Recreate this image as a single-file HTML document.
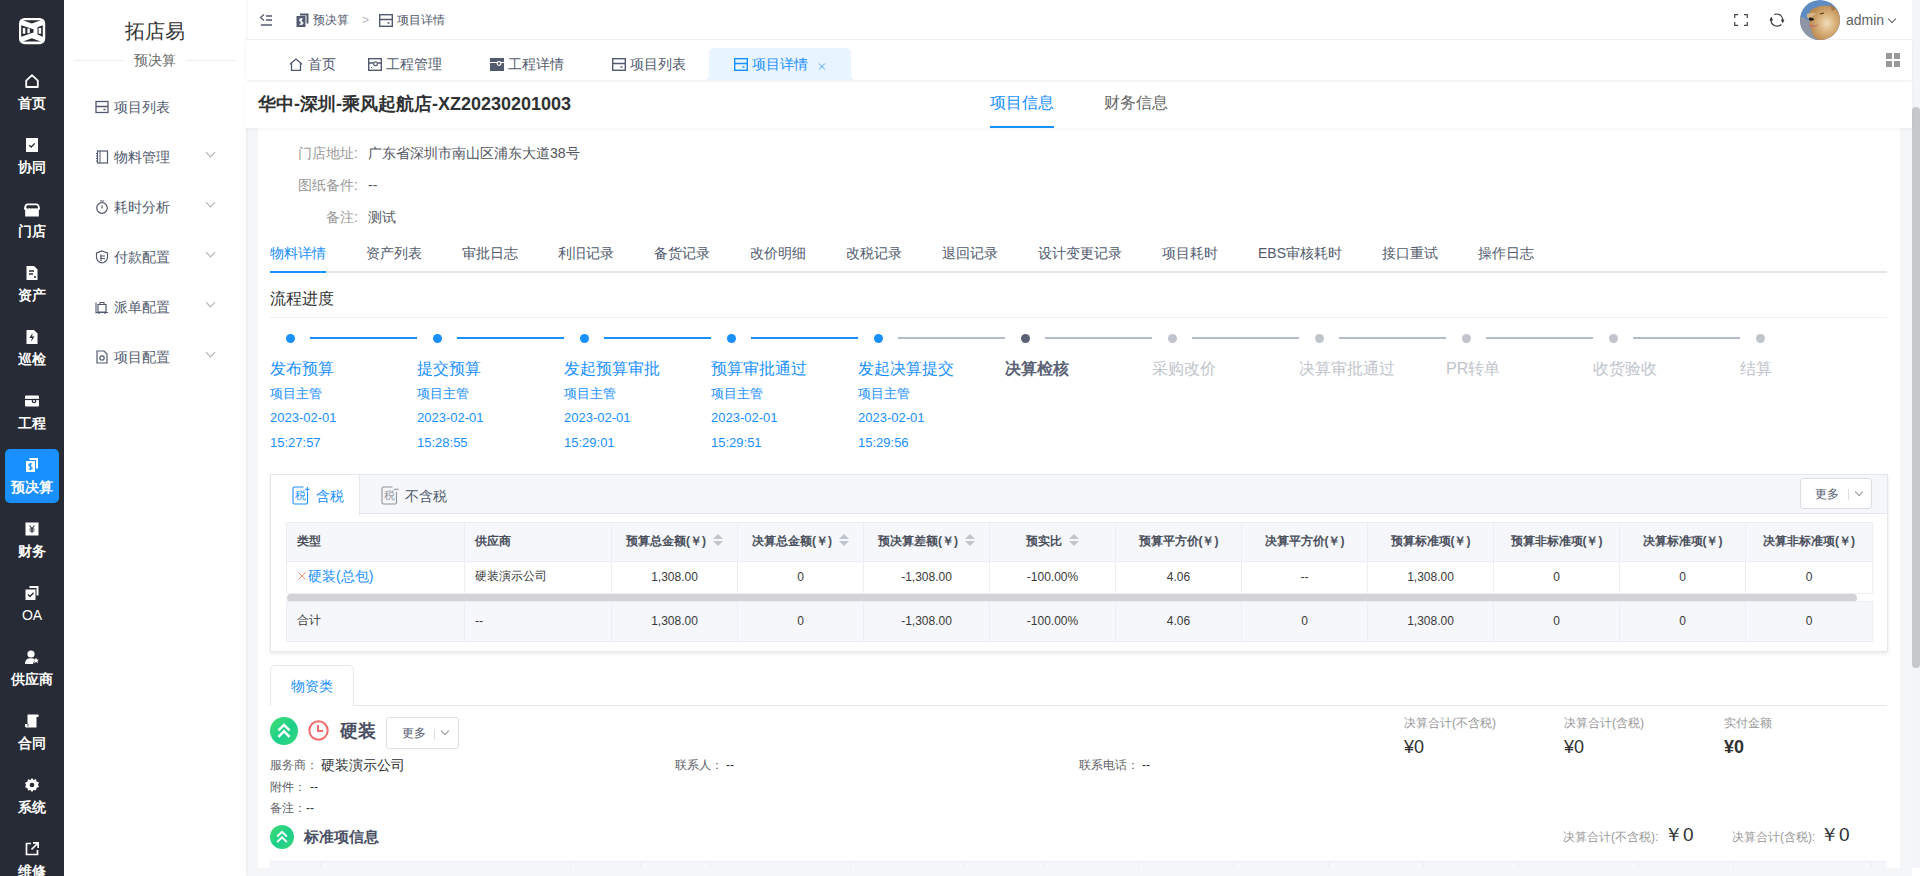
<!DOCTYPE html>
<html><head><meta charset="utf-8">
<style>
*{box-sizing:border-box;margin:0;padding:0}
html,body{width:1920px;height:876px;overflow:hidden;background:#fff;font-family:"Liberation Sans",sans-serif;color:#606266}
.a{position:absolute}
.t{position:absolute;white-space:nowrap;line-height:1}
#nav1{left:0;top:0;width:64px;height:876px;background:#272b35}
.n1{position:absolute;left:5px;width:54px;height:54px;border-radius:5px;color:#fff;font-size:14px}
.n1.on{background:#1890ff}
.n1 svg{position:absolute;left:20px;top:9px;width:14px;height:14px}
.n1 span{position:absolute;left:0;width:54px;top:31px;text-align:center;line-height:14px;font-weight:bold}
#nav2{left:64px;top:0;width:182px;height:876px;background:#fff;box-shadow:1px 0 3px rgba(0,0,0,.06)}
.n2{position:absolute;left:31px;width:140px;height:20px;font-size:14px;color:#515a6e;line-height:20px}
.n2 svg{position:absolute;left:0;top:3px;width:14px;height:14px}
.n2 span{position:absolute;left:19px;top:0}
.n2 i{position:absolute;left:112px;top:2px;width:7px;height:7px;border-right:1px solid #a8abb2;border-bottom:1px solid #a8abb2;transform:rotate(45deg)}

#hdr{left:246px;top:0;width:1666px;height:40px;background:#fff;border-bottom:1px solid #f2f3f5}
#tabs{z-index:2;left:246px;top:40px;width:1666px;height:40px;background:#fff;box-shadow:0 1px 3px rgba(0,0,0,.07)}
.tb{position:absolute;top:4px;height:40px;font-size:14px;color:#515a6e;line-height:40px;white-space:nowrap}
.tb svg{position:absolute;top:18px;width:14px;height:13px}
#ttl{z-index:1;left:246px;top:80px;width:1666px;height:48px;background:#fff;box-shadow:0 2px 4px rgba(0,0,0,.035)}
#bg{left:246px;top:128px;width:1666px;height:748px;background:#f5f6f8}
#card{left:258px;top:128px;width:1642px;height:740px;background:#fff}
#sb{left:1912px;top:0;width:8px;height:868px;background:#f4f5f8}
#thumb{left:1912px;top:107px;width:8px;height:561px;background:#c6c7ca;border-radius:4px}

.lb{position:absolute;font-size:14px;color:#999;line-height:20px;white-space:nowrap;text-align:right;width:100px}
.vl{position:absolute;font-size:14px;color:#505560;line-height:20px;white-space:nowrap}
.st{position:absolute;font-size:14px;color:#515a6e;line-height:20px;white-space:nowrap}
.stp{position:absolute;white-space:nowrap;color:#1890ff}
.stp .h{position:absolute;left:0;top:0;font-size:16px;line-height:20px}
.stp .s{position:absolute;left:0;font-size:13px;line-height:16px}
.dot{position:absolute;width:9px;height:9px;border-radius:50%;top:334px}
.ln{position:absolute;height:2px;top:337px;width:107px}

#tax{left:270px;top:474px;width:1618px;height:178px;border:1px solid #e4e7ed;background:#fff;box-shadow:0 2px 4px rgba(0,0,0,.08)}
#taxh{left:0;top:0;width:1616px;height:39px;background:#f5f7fa;border-bottom:1px solid #e4e7ed}
table.g{position:absolute;border-collapse:collapse;table-layout:fixed;font-size:12px}
table.g td{border:1px solid #ebeef5;padding:0 10px;white-space:nowrap;color:#606266;overflow:hidden}
table.g tr.hd td{background:#f5f7fa;color:#4a4f5c;font-weight:bold;height:39px;padding-bottom:2px}
table.g tr.bd td{height:32px;background:#fff;color:#3a3a3a;padding-bottom:2px}
table.g tr.ft td{height:40px;background:#f5f7fa;color:#3a3a3a;padding-bottom:2px}
.c{text-align:center}
.srt{display:inline-block;vertical-align:middle;margin-left:7px;width:10px;height:14px;position:relative;top:-1px}
.srt:before{content:"";position:absolute;left:0;top:1px;border-left:5px solid transparent;border-right:5px solid transparent;border-bottom:5px solid #c0c4cc}
.srt:after{content:"";position:absolute;left:0;top:8px;border-left:5px solid transparent;border-right:5px solid transparent;border-top:5px solid #c0c4cc}
.btn{position:absolute;width:72px;height:31px;border:1px solid #dcdfe6;border-radius:3px;background:#fff;font-size:12px;color:#515a6e}
.btn span{position:absolute;left:14px;top:8px;line-height:14px}
.btn b{position:absolute;left:47px;top:10px;width:1px;height:11px;background:#dcdfe6}
.btn i{position:absolute;left:55px;top:10px;width:6px;height:6px;border-right:1px solid #909399;border-bottom:1px solid #909399;transform:rotate(45deg)}

.chev2{position:absolute;width:24px;height:24px;border-radius:50%;background:linear-gradient(135deg,#41de6f 0,#1dcf8b 55%,#38d97a 100%)}
.sm{position:absolute;font-size:12px;color:#606266;line-height:16px;white-space:nowrap}
</style></head><body>

<div id="bg" class="a"></div>
<div id="card" class="a"></div>
<div class="lb" style="left:258px;top:143px">门店地址:</div><div class="vl" style="left:368px;top:143px">广东省深圳市南山区浦东大道38号</div>
<div class="lb" style="left:258px;top:175px">图纸备件:</div><div class="vl" style="left:368px;top:175px">--</div>
<div class="lb" style="left:258px;top:207px">备注:</div><div class="vl" style="left:368px;top:207px">测试</div>
<div class="a" style="left:270px;top:271px;width:1617px;height:2px;background:#e4e7ed"></div>
<div class="st" style="left:270px;top:243px;color:#1890ff">物料详情</div>
<div class="st" style="left:366px;top:243px">资产列表</div>
<div class="st" style="left:462px;top:243px">审批日志</div>
<div class="st" style="left:558px;top:243px">利旧记录</div>
<div class="st" style="left:654px;top:243px">备货记录</div>
<div class="st" style="left:750px;top:243px">改价明细</div>
<div class="st" style="left:846px;top:243px">改税记录</div>
<div class="st" style="left:942px;top:243px">退回记录</div>
<div class="st" style="left:1038px;top:243px">设计变更记录</div>
<div class="st" style="left:1162px;top:243px">项目耗时</div>
<div class="st" style="left:1258px;top:243px">EBS审核耗时</div>
<div class="st" style="left:1382px;top:243px">接口重试</div>
<div class="st" style="left:1478px;top:243px">操作日志</div>
<div class="a" style="left:270px;top:271px;width:56px;height:2px;background:#1890ff"></div>
<div class="t" style="left:270px;top:291px;font-size:16px;color:#303133">流程进度</div>
<div class="a" style="left:270px;top:317px;width:1617px;height:1px;background:#ebeef5"></div>
<div class="dot" style="left:285.5px;background:#1890ff"></div>
<div class="ln" style="left:310px;background:#1890ff"></div>
<div class="stp" style="left:270px;top:359px"><div class="h">发布预算</div><div class="s" style="top:27px">项目主管</div><div class="s" style="top:51px">2023-02-01</div><div class="s" style="top:76px">15:27:57</div></div>
<div class="dot" style="left:432.5px;background:#1890ff"></div>
<div class="ln" style="left:457px;background:#1890ff"></div>
<div class="stp" style="left:417px;top:359px"><div class="h">提交预算</div><div class="s" style="top:27px">项目主管</div><div class="s" style="top:51px">2023-02-01</div><div class="s" style="top:76px">15:28:55</div></div>
<div class="dot" style="left:579.5px;background:#1890ff"></div>
<div class="ln" style="left:604px;background:#1890ff"></div>
<div class="stp" style="left:564px;top:359px"><div class="h">发起预算审批</div><div class="s" style="top:27px">项目主管</div><div class="s" style="top:51px">2023-02-01</div><div class="s" style="top:76px">15:29:01</div></div>
<div class="dot" style="left:726.5px;background:#1890ff"></div>
<div class="ln" style="left:751px;background:#1890ff"></div>
<div class="stp" style="left:711px;top:359px"><div class="h">预算审批通过</div><div class="s" style="top:27px">项目主管</div><div class="s" style="top:51px">2023-02-01</div><div class="s" style="top:76px">15:29:51</div></div>
<div class="dot" style="left:873.5px;background:#1890ff"></div>
<div class="ln" style="left:898px;background:#b4bccc"></div>
<div class="stp" style="left:858px;top:359px"><div class="h">发起决算提交</div><div class="s" style="top:27px">项目主管</div><div class="s" style="top:51px">2023-02-01</div><div class="s" style="top:76px">15:29:56</div></div>
<div class="dot" style="left:1020.5px;background:#5b6175"></div>
<div class="ln" style="left:1045px;background:#b4bccc"></div>
<div class="stp" style="left:1005px;top:359px;color:#5b6175"><div class="h" style=";font-weight:bold">决算检核</div></div>
<div class="dot" style="left:1167.5px;background:#c0c4cc"></div>
<div class="ln" style="left:1192px;background:#b4bccc"></div>
<div class="stp" style="left:1152px;top:359px;color:#c0c4cc"><div class="h" style="">采购改价</div></div>
<div class="dot" style="left:1314.5px;background:#c0c4cc"></div>
<div class="ln" style="left:1339px;background:#b4bccc"></div>
<div class="stp" style="left:1299px;top:359px;color:#c0c4cc"><div class="h" style="">决算审批通过</div></div>
<div class="dot" style="left:1461.5px;background:#c0c4cc"></div>
<div class="ln" style="left:1486px;background:#b4bccc"></div>
<div class="stp" style="left:1446px;top:359px;color:#c0c4cc"><div class="h" style="">PR转单</div></div>
<div class="dot" style="left:1608.5px;background:#c0c4cc"></div>
<div class="ln" style="left:1633px;background:#b4bccc"></div>
<div class="stp" style="left:1593px;top:359px;color:#c0c4cc"><div class="h" style="">收货验收</div></div>
<div class="dot" style="left:1755.5px;background:#c0c4cc"></div>
<div class="stp" style="left:1740px;top:359px;color:#c0c4cc"><div class="h" style="">结算</div></div>
<div id="tax" class="a">
<div id="taxh" class="a"></div>
<div class="a" style="left:0;top:0;width:89px;height:40px;background:#fff;border-right:1px solid #e4e7ed"></div>
<svg class="a" style="left:21px;top:11px" width="19" height="19" viewBox="0 0 19 19"><path d="M11.5 1H2.5A1.5 1.5 0 0 0 1 2.5V16.5A1.5 1.5 0 0 0 2.5 18H14A1.5 1.5 0 0 0 15.5 16.5V6" fill="none" stroke="#1890ff" stroke-width="1.1"/><text x="2.6" y="13.3" font-size="10.5" fill="#1890ff" font-family="Liberation Sans,sans-serif">税</text><path d="M15.3 1V5.6M13 3.3H17.6" stroke="#1890ff" stroke-width="1.1"/></svg>
<div class="t" style="left:45px;top:14px;font-size:14px;color:#1890ff">含税</div>
<svg class="a" style="left:110px;top:11px" width="19" height="19" viewBox="0 0 19 19"><path d="M11.5 1H2.5A1.5 1.5 0 0 0 1 2.5V16.5A1.5 1.5 0 0 0 2.5 18H14A1.5 1.5 0 0 0 15.5 16.5V6" fill="none" stroke="#909399" stroke-width="1.1"/><text x="2.6" y="13.3" font-size="10.5" fill="#909399" font-family="Liberation Sans,sans-serif">税</text><path d="M13 3.3H17.6" stroke="#909399" stroke-width="1.1"/></svg>
<div class="t" style="left:134px;top:14px;font-size:14px;color:#515a6e">不含税</div>
<div class="btn" style="left:1529px;top:3px"><span>更多</span><b></b><i></i></div>
<table class="g" style="left:15px;top:47px;width:1586px"><colgroup><col style="width:178px"><col style="width:147px"><col style="width:126px"><col style="width:126px"><col style="width:126px"><col style="width:126px"><col style="width:126px"><col style="width:126px"><col style="width:126px"><col style="width:126px"><col style="width:126px"><col style="width:127px"></colgroup><tr class="hd"><td>类型</td><td>供应商</td><td class="c">预算总金额(￥)<i class="srt"></i></td><td class="c">决算总金额(￥)<i class="srt"></i></td><td class="c">预决算差额(￥)<i class="srt"></i></td><td class="c">预实比<i class="srt"></i></td><td class="c">预算平方价(￥)</td><td class="c">决算平方价(￥)</td><td class="c">预算标准项(￥)</td><td class="c">预算非标准项(￥)</td><td class="c">决算标准项(￥)</td><td class="c">决算非标准项(￥)</td></tr><tr class="bd"><td><svg width="8" height="8" viewBox="0 0 8 8" style="margin:0 2px 0 1px;vertical-align:1px"><path d="M.5 .5L7.5 7.5M7.5 .5L.5 7.5" stroke="#f78a6a" stroke-width="1"/></svg><span style="color:#1890ff;font-size:14px">硬装(总包)</span></td><td>硬装演示公司</td><td class="c">1,308.00</td><td class="c">0</td><td class="c">-1,308.00</td><td class="c">-100.00%</td><td class="c">4.06</td><td class="c">--</td><td class="c">1,308.00</td><td class="c">0</td><td class="c">0</td><td class="c">0</td></tr><tr><td colspan="12" style="height:8px;padding:0;border:none;background:#fff;position:relative"><div style="position:absolute;left:0;top:0;width:1570px;height:8px;border-radius:4px;background:#d3d3d5"></div></td></tr><tr class="ft"><td>合计</td><td>--</td><td class="c">1,308.00</td><td class="c">0</td><td class="c">-1,308.00</td><td class="c">-100.00%</td><td class="c">4.06</td><td class="c">0</td><td class="c">1,308.00</td><td class="c">0</td><td class="c">0</td><td class="c">0</td></tr></table>
</div>

<svg class="a" style="left:270px;top:665px" width="84" height="41" viewBox="0 0 84 41"><path d="M0.5 41V5A4.5 4.5 0 0 1 5 0.5H79A4.5 4.5 0 0 1 83.5 5V41" fill="#fff" stroke="#e4e7ed" stroke-width="1"/></svg>
<div class="a" style="left:353px;top:705px;width:1534px;height:1px;background:#e4e7ed"></div>
<div class="t" style="left:291px;top:679px;font-size:14px;color:#1890ff">物资类</div>
<div class="chev2" style="left:270px;top:717px;width:28px;height:28px"><svg style="position:absolute;left:0;top:0" width="28" height="28" viewBox="0 0 24 24"><path d="M7.2 11.5L12 6.8L16.8 11.5M7.2 17L12 12.3L16.8 17" fill="none" stroke="#fff" stroke-width="2.2"/></svg></div>
<svg class="a" style="left:308px;top:720px" width="21" height="21" viewBox="0 0 21 21"><circle cx="10.5" cy="10.5" r="9.2" fill="none" stroke="#f56c6c" stroke-width="2"/><path d="M10 5V11H15" fill="none" stroke="#f56c6c" stroke-width="2"/></svg>
<div class="t" style="left:340px;top:722px;font-size:18px;font-weight:bold;color:#4a5064">硬装</div>
<div class="btn" style="left:386px;top:717px;width:73px;height:32px"><span style="left:15px;top:8px">更多</span><b style="left:47px;top:11px"></b><i style="left:55px;top:10px"></i></div>
<div class="sm" style="left:270px;top:757px">服务商：</div><div class="t" style="left:321px;top:758px;font-size:14px;color:#303133">硬装演示公司</div>
<div class="sm" style="left:675px;top:757px">联系人：</div><div class="sm" style="left:726px;top:757px;color:#303133">--</div>
<div class="sm" style="left:1079px;top:757px">联系电话：</div><div class="sm" style="left:1142px;top:757px;color:#303133">--</div>
<div class="sm" style="left:270px;top:779px">附件：</div><div class="sm" style="left:310px;top:779px;color:#303133">--</div>
<div class="sm" style="left:270px;top:800px">备注：</div><div class="sm" style="left:306px;top:800px;color:#303133">--</div>
<div class="sm" style="left:1404px;top:715px;color:#999">决算合计(不含税)</div><div class="t" style="left:1404px;top:738px;font-size:18px;color:#303133">¥0</div>
<div class="sm" style="left:1564px;top:715px;color:#999">决算合计(含税)</div><div class="t" style="left:1564px;top:738px;font-size:18px;color:#303133">¥0</div>
<div class="sm" style="left:1724px;top:715px;color:#999">实付金额</div><div class="t" style="left:1724px;top:738px;font-size:18px;font-weight:bold;color:#303133">¥0</div>
<div class="chev2" style="left:270px;top:825px;width:24px;height:24px"><svg style="position:absolute;left:0;top:0" width="24" height="24" viewBox="0 0 24 24"><path d="M7.2 11.5L12 6.8L16.8 11.5M7.2 17L12 12.3L16.8 17" fill="none" stroke="#fff" stroke-width="2"/></svg></div>
<div class="t" style="left:304px;top:829px;font-size:15px;font-weight:bold;color:#4a5064">标准项信息</div>
<div class="sm" style="left:1563px;top:829px;color:#999">决算合计(不含税):</div><div class="t" style="left:1664px;top:825px;font-size:19px;color:#303133">￥0</div>
<div class="sm" style="left:1732px;top:829px;color:#999">决算合计(含税):</div><div class="t" style="left:1820px;top:825px;font-size:19px;color:#303133">￥0</div>
<div class="a" style="left:270px;top:861px;width:1617px;height:7px;background:#f5f7fa;border-top:1px solid #ebeef5"></div>
<div class="a" style="left:320px;top:861px;width:1px;height:7px;background:#ebeef5"></div><div class="a" style="left:570px;top:861px;width:1px;height:7px;background:#ebeef5"></div><div class="a" style="left:640px;top:861px;width:1px;height:7px;background:#ebeef5"></div><div class="a" style="left:710px;top:861px;width:1px;height:7px;background:#ebeef5"></div><div class="a" style="left:850px;top:861px;width:1px;height:7px;background:#ebeef5"></div><div class="a" style="left:963px;top:861px;width:1px;height:7px;background:#ebeef5"></div><div class="a" style="left:1043px;top:861px;width:1px;height:7px;background:#ebeef5"></div><div class="a" style="left:1138px;top:861px;width:1px;height:7px;background:#ebeef5"></div><div class="a" style="left:1233px;top:861px;width:1px;height:7px;background:#ebeef5"></div><div class="a" style="left:1328px;top:861px;width:1px;height:7px;background:#ebeef5"></div><div class="a" style="left:1423px;top:861px;width:1px;height:7px;background:#ebeef5"></div><div class="a" style="left:1518px;top:861px;width:1px;height:7px;background:#ebeef5"></div><div class="a" style="left:1638px;top:861px;width:1px;height:7px;background:#ebeef5"></div><div class="a" style="left:1733px;top:861px;width:1px;height:7px;background:#ebeef5"></div><div class="a" style="left:1871px;top:861px;width:1px;height:7px;background:#ebeef5"></div><div class="a" style="left:270px;top:861px;width:1px;height:7px;background:#ebeef5"></div>
<div id="sb" class="a"></div>
<div id="thumb" class="a"></div>

<div id="hdr" class="a">
  <svg class="a" style="left:13px;top:13px" width="14" height="14" viewBox="0 0 14 14"><path d="M5 1.5L1.5 4.5L5 7.5" fill="none" stroke="#515a6e" stroke-width="1.2"/><path d="M7 3H13M7 7H13M2 12H13" stroke="#515a6e" stroke-width="1.4"/></svg>
  <svg class="a" style="left:50px;top:13px" width="13" height="14" viewBox="0 0 13 14"><path d="M4 0.5H12.5V10.5H10.5V2.5H4Z" fill="#515a6e"/><rect x="0.5" y="3" width="9" height="11" fill="#515a6e"/><path d="M6.8 6.3C6.3 5.6 3.6 5.6 3.6 7.2C3.6 8.7 7 8.3 7 10C7 11.6 4.2 11.5 3.6 10.8M5.3 5V12" fill="none" stroke="#fff" stroke-width="1.1"/></svg>
  <div class="t" style="left:67px;top:14px;font-size:12px;color:#515a6e">预决算</div>
  <div class="t" style="left:116px;top:14px;font-size:12px;color:#b4b8c2">&gt;</div>
  <svg class="a" style="left:133px;top:14px" width="14" height="13" viewBox="0 0 14 13"><rect x="0.7" y="0.7" width="12.6" height="11.6" fill="none" stroke="#515a6e" stroke-width="1.4"/><path d="M0.7 5.5H13.3M8.5 9H10.5" stroke="#515a6e" stroke-width="1.4"/></svg>
  <div class="t" style="left:151px;top:14px;font-size:12px;color:#515a6e">项目详情</div>

  <svg class="a" style="left:1488px;top:14px" width="14" height="12" viewBox="0 0 14 12"><path d="M0.7 4V0.7H4M10 0.7H13.3V4M13.3 8V11.3H10M4 11.3H0.7V8" fill="none" stroke="#444" stroke-width="1.2"/></svg>
  <svg class="a" style="left:1523px;top:12px" width="16" height="16" viewBox="-1 -1 16 16"><path d="M4.2 1.6A6 6 0 0 1 12.8 6.6M11.3 11.3A6 6 0 0 1 1.1 6.2" fill="none" stroke="#333" stroke-width="1.15"/><path d="M10.9 6.6L14.4 6.6L12.7 10.6Z M-0.5 7.4L3 7.4L1.3 3.4Z" fill="#333"/></svg>
  <svg class="a" style="left:1554px;top:0" width="40" height="40" viewBox="0 0 40 40"><defs><clipPath id="av"><circle cx="20" cy="20" r="20"/></clipPath><radialGradient id="dg" cx="55%" cy="50%" r="55%"><stop offset="0" stop-color="#efdcbc"/><stop offset=".45" stop-color="#dcb47e"/><stop offset="1" stop-color="#b98a50"/></radialGradient></defs><g clip-path="url(#av)"><rect width="40" height="40" fill="#5e8bc2"/><path d="M0 16L12 22L20 40H0Z" fill="#8d96a2"/><path d="M10 11C14 7 22 5 30 6C37 8 41 14 41 22C41 32 34 41 24 41C17 41 12 36 11 28C9 24 9 15 10 11Z" fill="url(#dg)"/><path d="M7 14C10 13 14 12 16 14C14 15 12 16 11 19C9 19 6 18 7 14Z" fill="#d6b384"/><path d="M9 18C11 17 14 18 14 20C12 21 10 21 9 20Z" fill="#1e1a18"/><path d="M9 24C12 26 16 26 19 24C17 27 12 28 9 26Z" fill="#c26a6e"/><path d="M20 14L24 13" stroke="#4a3620" stroke-width="1.2"/><path d="M30 4L36 9L32 11Z" fill="#a67a44"/></g></svg>
  <div class="t" style="left:1600px;top:13px;font-size:14px;color:#606266">admin</div>
  <div class="a" style="left:1643px;top:16px;width:6px;height:6px;border-right:1.3px solid #606266;border-bottom:1.3px solid #606266;transform:rotate(45deg)"></div>
</div>

<div id="tabs" class="a">
  <div class="tb" style="left:43px"><svg style="left:0;top:14px" viewBox="0 0 14 13"><path d="M7 1L1 6.2M7 1L13 6.2M2.5 5V12.3H11.5V5" fill="none" stroke="#515a6e" stroke-width="1.3" stroke-linejoin="round"/></svg><span style="position:absolute;left:19px">首页</span></div>
  <div class="tb" style="left:122px"><svg style="left:0;top:14px" viewBox="0 0 14 13"><rect x="0.7" y="0.7" width="12.6" height="11.6" fill="none" stroke="#515a6e" stroke-width="1.4"/><path d="M0.7 5H5.5M9.5 5H13.3" stroke="#515a6e" stroke-width="1.3"/><circle cx="7.5" cy="5.8" r="1.9" fill="none" stroke="#515a6e" stroke-width="1.2"/><path d="M3 9.5H4" stroke="#515a6e" stroke-width="1.2"/></svg><span style="position:absolute;left:18px">工程管理</span></div>
  <div class="tb" style="left:244px"><svg style="left:0;top:14px" viewBox="0 0 14 13"><rect x="0" y="0" width="14" height="13" fill="#515a6e"/><path d="M0 4.5H14" stroke="#fff" stroke-width="1"/><circle cx="9" cy="5.5" r="2.4" fill="#fff"/><circle cx="9" cy="5.5" r="1.2" fill="#515a6e"/></svg><span style="position:absolute;left:18px">工程详情</span></div>
  <div class="tb" style="left:366px"><svg style="left:0;top:14px" viewBox="0 0 14 13"><rect x="0.7" y="0.7" width="12.6" height="11.6" fill="none" stroke="#515a6e" stroke-width="1.4"/><path d="M0.7 5.5H13.3M8.5 9H10.5" stroke="#515a6e" stroke-width="1.4"/></svg><span style="position:absolute;left:18px">项目列表</span></div>
  <svg class="a" style="left:457px;top:8px" width="154" height="32" viewBox="0 0 154 32"><path d="M0 32C4 32 6 30 6 26V6C6 2 8 0 12 0H142C146 0 148 2 148 6V26C148 30 150 32 154 32Z" fill="#e8f4ff"/></svg>
  <div class="tb" style="left:488px;color:#1890ff"><svg style="left:0;top:14px" viewBox="0 0 14 13"><rect x="0.7" y="0.7" width="12.6" height="11.6" fill="none" stroke="#1890ff" stroke-width="1.4"/><path d="M0.7 5.5H13.3M8.5 9H10.5" stroke="#1890ff" stroke-width="1.4"/></svg><span style="position:absolute;left:18px">项目详情</span></div>
  <svg class="a" style="left:572px;top:23px" width="8" height="7" viewBox="0 0 8 7"><path d="M1 0.5L7 6.5M7 0.5L1 6.5" stroke="#3a9fff" stroke-width="0.9"/></svg>
  <svg class="a" style="left:1640px;top:13px" width="14" height="14" viewBox="0 0 14 14"><rect x="0" y="0" width="6" height="6" fill="#999"/><rect x="8" y="0" width="6" height="6" fill="#999"/><rect x="0" y="8" width="6" height="6" fill="#999"/><rect x="8" y="8" width="6" height="6" fill="#999"/></svg>
</div>

<div id="ttl" class="a">
  <div class="t" style="left:12px;top:15px;font-size:18px;font-weight:bold;color:#303133">华中-深圳-乘风起航店-XZ20230201003</div>
  <div class="t" style="left:744px;top:15px;font-size:16px;color:#1890ff">项目信息</div>
  <div class="a" style="left:744px;top:46px;width:64px;height:2px;background:#1890ff"></div>
  <div class="t" style="left:858px;top:15px;font-size:16px;color:#666">财务信息</div>
</div>

<div id="nav1" class="a">
  <svg class="a" style="left:18px;top:17px" width="28" height="28" viewBox="0 0 28 28">
    <rect x="1" y="1" width="26.2" height="26.2" rx="5.5" fill="#fff"/>
    <path d="M5 3.3H22.8L13.8 6.6Z" fill="#272b35"/>
    <path d="M5 24.5H22.8L13.8 21.2Z" fill="#272b35"/>
    <path d="M3.2 8.2L15.5 12.2V15.6L3.2 19.8Z" fill="#272b35"/>
    <path d="M24.8 8.2V19.8L19.5 17.6V10.2Z" fill="#272b35"/>
    <path d="M4.8 11H7.3V16.8H4.8Z M9.4 11.6H11.8V16.2H9.4Z M20.6 11H23.2V16.8H20.6Z" fill="#fff"/>
  </svg>
<div class="n1" style="top:65px"><svg viewBox="0 0 14 14"><path d="M7 1.2L1.2 6.6V13H12.8V6.6Z" fill="none" stroke="#fff" stroke-width="1.8" stroke-linejoin="round"/></svg><span>首页</span></div>
<div class="n1" style="top:129px"><svg viewBox="0 0 14 14"><rect x="1" y="0" width="12" height="14" fill="#fff"/><path d="M4.2 7.2L6.2 9L9.8 5.4" fill="none" stroke="#272b35" stroke-width="1.3"/></svg><span>协同</span></div>
<div class="n1" style="top:193px"><svg viewBox="0 0 14 14" style="left:19px;top:10px;width:16px;height:14px" preserveAspectRatio="none"><path d="M3 .6H11C12.3 .6 13.2 1.8 13.6 3.5L14 5.3C14 6.3 13.6 6.9 13 7.2V13.4H1V7.2C.4 6.9 0 6.3 0 5.3L.4 3.5C.8 1.8 1.7 .6 3 .6Z" fill="#fff"/><path d="M3.2 2.3H10.8C11.6 2.3 12 3.2 12.2 4.2V4.9C11.4 5.7 10.4 5.7 9.7 4.9C9 5.7 8 5.7 7.2 4.9C6.5 5.7 5.5 5.7 4.8 4.9C4.1 5.7 3 5.7 2 4.9V4.2C2.1 3.2 2.5 2.3 3.2 2.3Z" fill="#272b35"/></svg><span>门店</span></div>
<div class="n1" style="top:257px"><svg viewBox="0 0 14 14"><path d="M1.5 0H9L12.5 3.5V14H1.5Z" fill="#fff"/><path d="M4 5H9M4 8H8M9 11H11" stroke="#272b35" stroke-width="1.4"/></svg><span>资产</span></div>
<div class="n1" style="top:321px"><svg viewBox="0 0 14 14"><path d="M1.5 0H9L12.5 3.5V14H1.5Z" fill="#fff"/><path d="M7.5 3L4.5 8H7L5.8 12L9.5 6.5H7.2Z" fill="#272b35"/></svg><span>巡检</span></div>
<div class="n1" style="top:385px"><svg viewBox="0 0 14 14"><rect x="0" y="1.5" width="14" height="11" rx="1" fill="#fff"/><path d="M0 5.5H14" stroke="#272b35" stroke-width="1.2"/><circle cx="9" cy="7" r="2.3" fill="#272b35"/><circle cx="9" cy="7" r="1.1" fill="#fff"/></svg><span>工程</span></div>
<div class="n1 on" style="top:449px"><svg viewBox="0 0 14 14"><path d="M4.5 0H13V10.5H11V2H4.5Z" fill="#fff"/><rect x="1" y="3" width="9" height="11" fill="#fff"/><path d="M7 6.3C6.5 5.6 3.8 5.6 3.8 7.2C3.8 8.7 7.2 8.3 7.2 10C7.2 11.6 4.4 11.5 3.8 10.8M5.5 5V12" fill="none" stroke="#1890ff" stroke-width="1.1"/></svg><span>预决算</span></div>
<div class="n1" style="top:513px"><svg viewBox="0 0 14 14"><rect x="0.5" y="0.5" width="13" height="13" fill="#fff"/><path d="M4.5 3.5L7 6.5L9.5 3.5M7 6.5V11M4.5 7H9.5M4.5 9H9.5" fill="none" stroke="#272b35" stroke-width="1.1"/></svg><span>财务</span></div>
<div class="n1" style="top:577px"><svg viewBox="0 0 14 14"><path d="M4.5 0H13.5V9.5H11.5V2H4.5Z" fill="#fff"/><rect x="0.5" y="3.5" width="10" height="10.5" fill="#fff"/><path d="M3 8.5L5 10.5L8.5 6.8" fill="none" stroke="#272b35" stroke-width="1.3"/></svg><span style="font-weight:normal">OA</span></div>
<div class="n1" style="top:641px"><svg viewBox="0 0 14 14"><circle cx="6" cy="4" r="3.6" fill="#fff"/><path d="M0 14C0 9.5 2.5 8.3 6 8.3C8 8.3 9 8.6 9.5 9L8 14Z" fill="#fff"/><path d="M11 7.5L11.9 9.6L14 9.7L12.4 11L13 13.2L11 12L9 13.2L9.6 11L8 9.7L10.1 9.6Z" fill="#fff"/></svg><span>供应商</span></div>
<div class="n1" style="top:705px"><svg viewBox="0 0 14 14"><path d="M2.5 0.5H13.5V3H11.5V13.5H1.5C0.5 13.5 0 12.8 0 12V10H2.5Z" fill="#fff"/><path d="M3 10V12.5" stroke="#272b35" stroke-width="0.8"/></svg><span>合同</span></div>
<div class="n1" style="top:769px"><svg viewBox="0 0 14 14"><path d="M7 0L8.6 1.9L11 1.1L11.5 3.5L13.9 4.3L13 6.7L14 9L11.6 9.8L11 12.3L8.6 11.9L7 14L5.4 12L3 12.6L2.5 10.2L0.1 9.3L1 7L0 4.7L2.4 3.8L3 1.3L5.4 1.9Z" fill="#fff"/><circle cx="7" cy="7" r="2.3" fill="#272b35"/></svg><span>系统</span></div>
<div class="n1" style="top:833px"><svg viewBox="0 0 14 14"><path d="M6 1.5H1.5V12.5H12.5V8" fill="none" stroke="#fff" stroke-width="1.7"/><path d="M8 0.8H13.2V6M13 1L6.5 7.5" fill="none" stroke="#fff" stroke-width="1.7"/></svg><span>维修</span></div>
</div>

<div id="nav2" class="a">
  <div class="t" style="left:61px;top:21px;font-size:20px;color:#333">拓店易</div>
  <div class="a" style="left:10px;top:60px;width:50px;height:1px;background:#eee"></div>
  <div class="a" style="left:122px;top:60px;width:50px;height:1px;background:#eee"></div>
  <div class="t" style="left:70px;top:53px;font-size:14px;color:#666">预决算</div>
<div class="n2" style="top:97px"><svg viewBox="0 0 14 14"><rect x="1" y="1.5" width="12" height="11" fill="none" stroke="#515a6e" stroke-width="1.3"/><path d="M1 6.5H13M8.5 9.5H10.5" stroke="#515a6e" stroke-width="1.3"/></svg><span>项目列表</span></div>
<div class="n2" style="top:147px"><svg viewBox="0 0 14 14"><rect x="2.5" y="1" width="10" height="12" fill="none" stroke="#515a6e" stroke-width="1.2"/><path d="M5 1V13M1 3.5H3M1 6H3M1 8.5H3M1 11H3" stroke="#515a6e" stroke-width="1"/></svg><span>物料管理</span><i></i></div>
<div class="n2" style="top:197px"><svg viewBox="0 0 14 14"><circle cx="7" cy="8" r="5.3" fill="none" stroke="#515a6e" stroke-width="1.2"/><path d="M5 1H9M7 5.5V8.5" stroke="#515a6e" stroke-width="1.2"/></svg><span>耗时分析</span><i></i></div>
<div class="n2" style="top:247px"><svg viewBox="0 0 14 14"><path d="M7 1L12.5 3V7C12.5 10 10 12.3 7 13C4 12.3 1.5 10 1.5 7V3Z" fill="none" stroke="#515a6e" stroke-width="1.2"/><path d="M5 6H10M5 8.5H10M6 4.5V11" stroke="#515a6e" stroke-width="1.1"/></svg><span>付款配置</span><i></i></div>
<div class="n2" style="top:297px"><svg viewBox="0 0 14 14"><path d="M3 4.5H11V12H3Z" fill="none" stroke="#515a6e" stroke-width="1.2"/><path d="M5 4.5V2.5H9V4.5M1 2.5V12.5H13M1 12.5V13.5" fill="none" stroke="#515a6e" stroke-width="1.1"/><circle cx="4" cy="13.2" r=".8" fill="#515a6e"/><circle cx="10" cy="13.2" r=".8" fill="#515a6e"/></svg><span>派单配置</span><i></i></div>
<div class="n2" style="top:347px"><svg viewBox="0 0 14 14"><path d="M2 1H9L12 4V13H2Z" fill="none" stroke="#515a6e" stroke-width="1.2"/><circle cx="7" cy="8" r="2.2" fill="none" stroke="#515a6e" stroke-width="1.2"/></svg><span>项目配置</span><i></i></div>
</div>

</body></html>
